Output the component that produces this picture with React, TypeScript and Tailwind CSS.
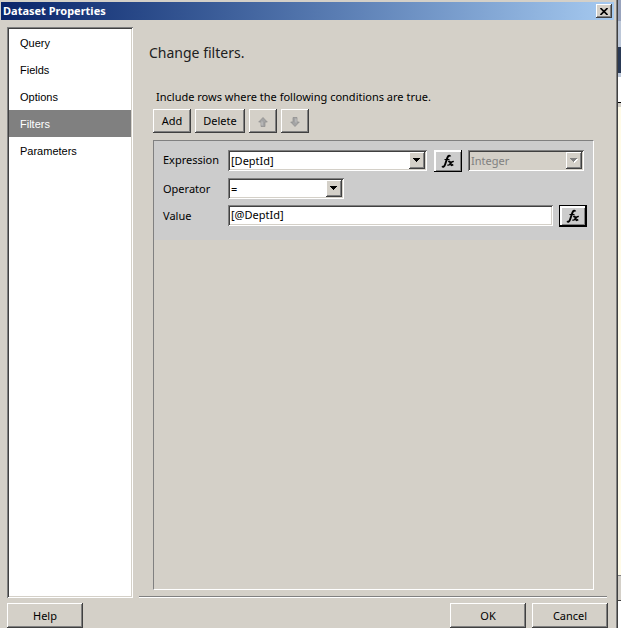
import { useState } from "react"
import type { ReactNode } from "react"

const sunken =
  "shadow-[inset_1px_1px_0_#808080,inset_-1px_-1px_0_#ffffff,inset_2px_2px_0_#404040,inset_-2px_-2px_0_#d4d0c8]"
const raised =
  "shadow-[inset_-1px_-1px_0_#404040,inset_1px_1px_0_#ffffff,inset_-2px_-2px_0_#808080]"

const pages = ["Query", "Fields", "Options", "Filters", "Parameters"]

type ButtonProps = {
  children: ReactNode
  className?: string
  label?: string
  disabled?: boolean
}

const Button = ({ children, className = "", label, disabled }: ButtonProps) => (
  <button
    type="button"
    aria-label={label}
    disabled={disabled}
    className={`flex items-center justify-center bg-[#d4d0c8] ${raised} ${className}`}
  >
    {children}
  </button>
)

const FxButton = ({ label, focused }: { label: string; focused?: boolean }) => (
  <button
    type="button"
    aria-label={label}
    className={`flex h-[22px] w-7 shrink-0 items-center justify-center bg-[#cccccc] ${
      focused
        ? "border border-black shadow-[inset_-1px_-1px_0_#000000,inset_2px_2px_0_#ffffff,inset_-2px_-2px_0_#808080]"
        : "shadow-[inset_-1px_-1px_0_#000000,inset_2px_2px_0_#ffffff,inset_-2px_-2px_0_#808080]"
    }`}
  >
    <svg width="14" height="14" viewBox="0 0 14 14" fill="none" stroke="#000000" aria-hidden="true">
      <path d="M9.300 2.600C8.900 1.200 7.200 1.300 6.400 3.600L4 10.800C3.400 12.600 2 13.200 1.200 12.100" strokeWidth="1.9" />
      <path d="M3.500 5.500h5" strokeWidth="1.1" />
      <path d="M7.200 7.700c1.500-.7 2 .2 2.500 2s.9 2 2.500.9" strokeWidth="1.8" />
      <path d="M12.800 7.600c-1.600-.6-2.800 1-3.500 2s-1.600 2.100-2.900 1.300" strokeWidth="1.300" />
    </svg>
  </button>
)

type SelectProps = {
  id: string
  options: string[]
  className: string
  label?: string
  disabled?: boolean
}

const Select = ({ id, options, className, label, disabled }: SelectProps) => (
  <div className={`relative h-[21px] ${className}`}>
    <select
      id={id}
      aria-label={label}
      disabled={disabled}
      className={`block h-full w-full appearance-none pr-5 pl-[3px] ${sunken} ${
        disabled ? "bg-[#d4d0c8] text-[#808080] opacity-100" : "bg-white text-black"
      }`}
    >
      {options.map((option) => (
        <option key={option}>{option}</option>
      ))}
    </select>
    <span
      className={`pointer-events-none absolute top-[2px] right-[2px] bottom-[2px] flex w-4 items-center justify-center bg-[#d4d0c8] ${raised}`}
    >
      <svg width="8" height="5" viewBox="0 0 8 5" shapeRendering="crispEdges">
        {disabled && <path d="M1 1h7v1H7v1H6v1H5v1H4V4H3V3H2V2H1z" fill="#ffffff" />}
        <path d="M0 0h7v1H6v1H5v1H4v1H3V3H2V2H1V1H0z" fill={disabled ? "#808080" : "#000000"} />
      </svg>
    </span>
  </div>
)

const Arrow = ({ down }: { down?: boolean }) => (
  <svg width="10" height="10" viewBox="0 0 10 10" className={`mt-[2px] ${down ? "rotate-180" : ""}`} aria-hidden="true">
    <path d="M5 .5L9.300 5H7v4.500H3V5H.7z" fill="#a4a4a4" stroke="#8c8c8c" strokeWidth=".7" />
    <path d="M4 4.500v4" stroke="#c8c8c8" />
  </svg>
)

const App = () => {
  const [page, setPage] = useState("Filters")
  const [value, setValue] = useState("[@DeptId]")

  return (
    <div className="flex h-screen overflow-hidden bg-[#d4d0c8] font-['Noto_Sans','Open_Sans',sans-serif] text-[11px] leading-4 text-black">
      <div className="flex min-w-0 flex-1 flex-col border-r border-[#808080] pt-[2px] pl-px">
        {/* Title bar */}
        <header className="mr-[2px] flex h-[18px] shrink-0 items-center justify-between bg-gradient-to-r from-[#0a246a] to-[#a6caf0] px-[2px]">
          <h1 className="font-bold text-white">Dataset Properties</h1>
          <Button label="Close" className="h-[14px] w-4">
            <svg width="8" height="7" viewBox="0 0 8 7" stroke="#000000" strokeWidth="1.6" aria-hidden="true">
              <path d="M.5 0l7 7M7.500 0l-7 7" />
            </svg>
          </Button>
        </header>

        <div className="flex min-h-0 flex-1 pt-[7px] pl-[6px]">
          {/* Page list */}
          <nav className={`w-[126px] shrink-0 bg-white p-[2px] ${sunken}`}>
            {pages.map((item) => (
              <button
                key={item}
                type="button"
                onClick={() => setPage(item)}
                className={`block h-[27px] w-full pl-[11px] text-left font-['Liberation_Sans',sans-serif] ${
                  page === item ? "bg-[#808080] text-white" : ""
                }`}
              >
                {item}
              </button>
            ))}
          </nav>

          <main className="flex min-w-0 flex-1 flex-col pr-[9px] pl-[6px]">
            <div className="flex min-h-0 flex-1 flex-col pr-[13px] pl-[14px]">
              <h2 className="-ml-1 pt-4 text-[14px] leading-5 text-[#202020]">Change filters.</h2>
              <p className="pt-[26px] pl-[3px]">Include rows where the following conditions are true.</p>
              <div className="flex gap-1 pt-1">
                <Button className="h-6 w-[38px]">Add</Button>
                <Button className="h-6 w-[50px]">Delete</Button>
                <Button label="Move up" disabled className="h-6 w-7">
                  <Arrow />
                </Button>
                <Button label="Move down" disabled className="h-6 w-7">
                  <Arrow down />
                </Button>
              </div>

              {/* Filter conditions */}
              <section className="mt-[7px] mb-[6px] flex-1 border border-t-[#808080] border-r-white border-b-white border-l-[#808080]">
                <div className="flex flex-col gap-[6px] bg-[#cccccc] pt-[9px] pr-[6px] pb-[13px] pl-[9px]">
                  <div className="flex items-start">
                    <label htmlFor="expression" className="w-[65px] shrink-0 leading-5">
                      Expression
                    </label>
                    <Select id="expression" options={["[DeptId]"]} className="min-w-0 flex-1" />
                    <div className="mr-[6px] ml-[7px] flex">
                      <FxButton label="Expression builder" />
                    </div>
                    <Select
                      id="type"
                      label="Data type"
                      options={["Integer"]}
                      disabled
                      className="mr-[3px] w-[116px]"
                    />
                  </div>
                  <div className="flex items-center">
                    <label htmlFor="operator" className="w-[65px] shrink-0">
                      Operator
                    </label>
                    <Select id="operator" options={["=", "<>", "<", ">"]} className="w-[116px]" />
                  </div>
                  <div className="flex items-start">
                    <label htmlFor="value" className="w-[65px] shrink-0 leading-[22px]">
                      Value
                    </label>
                    <input
                      id="value"
                      value={value}
                      onChange={(e) => setValue(e.target.value)}
                      className={`mr-[6px] h-[21px] min-w-0 flex-1 bg-white px-[3px] pb-[2px] ${sunken}`}
                    />
                    <FxButton label="Value expression" focused />
                  </div>
                </div>
              </section>
            </div>
            <hr className="h-[2px] border-t border-b border-t-[#808080] border-b-white" />
          </main>
        </div>

        {/* Dialog buttons */}
        <footer className="flex shrink-0 items-start gap-[6px] pt-[5px] pr-2 pl-[6px]">
          <Button className="mr-auto h-[25px] w-[76px]">Help</Button>
          <Button className="h-[25px] w-[76px]">OK</Button>
          <Button className="h-[25px] w-[76px]">Cancel</Button>
        </footer>
      </div>

      {/* Window behind the dialog */}
      <div className="flex w-1 shrink-0 flex-col border-l border-[#404040] bg-[#fffbe8]">
        <div className="h-[21px] bg-[#98a3bd]" />
        <div className="h-[26px] bg-[#bcc7d8]" />
        <div className="h-[26px] bg-[#293955]" />
        <div className="h-1 bg-[#bcc7d8]" />
        <div className="h-[26px] border-b border-black bg-white" />
        <div className="h-1 bg-[#d4d0c8]" />
        <div className="flex-1" />
        <div className="h-[26px] border-t border-b border-t-[#808080] border-b-[#404040] bg-[#d4d0c8]" />
        <div className="h-[27px] bg-white" />
      </div>
    </div>
  )
}

export default App
